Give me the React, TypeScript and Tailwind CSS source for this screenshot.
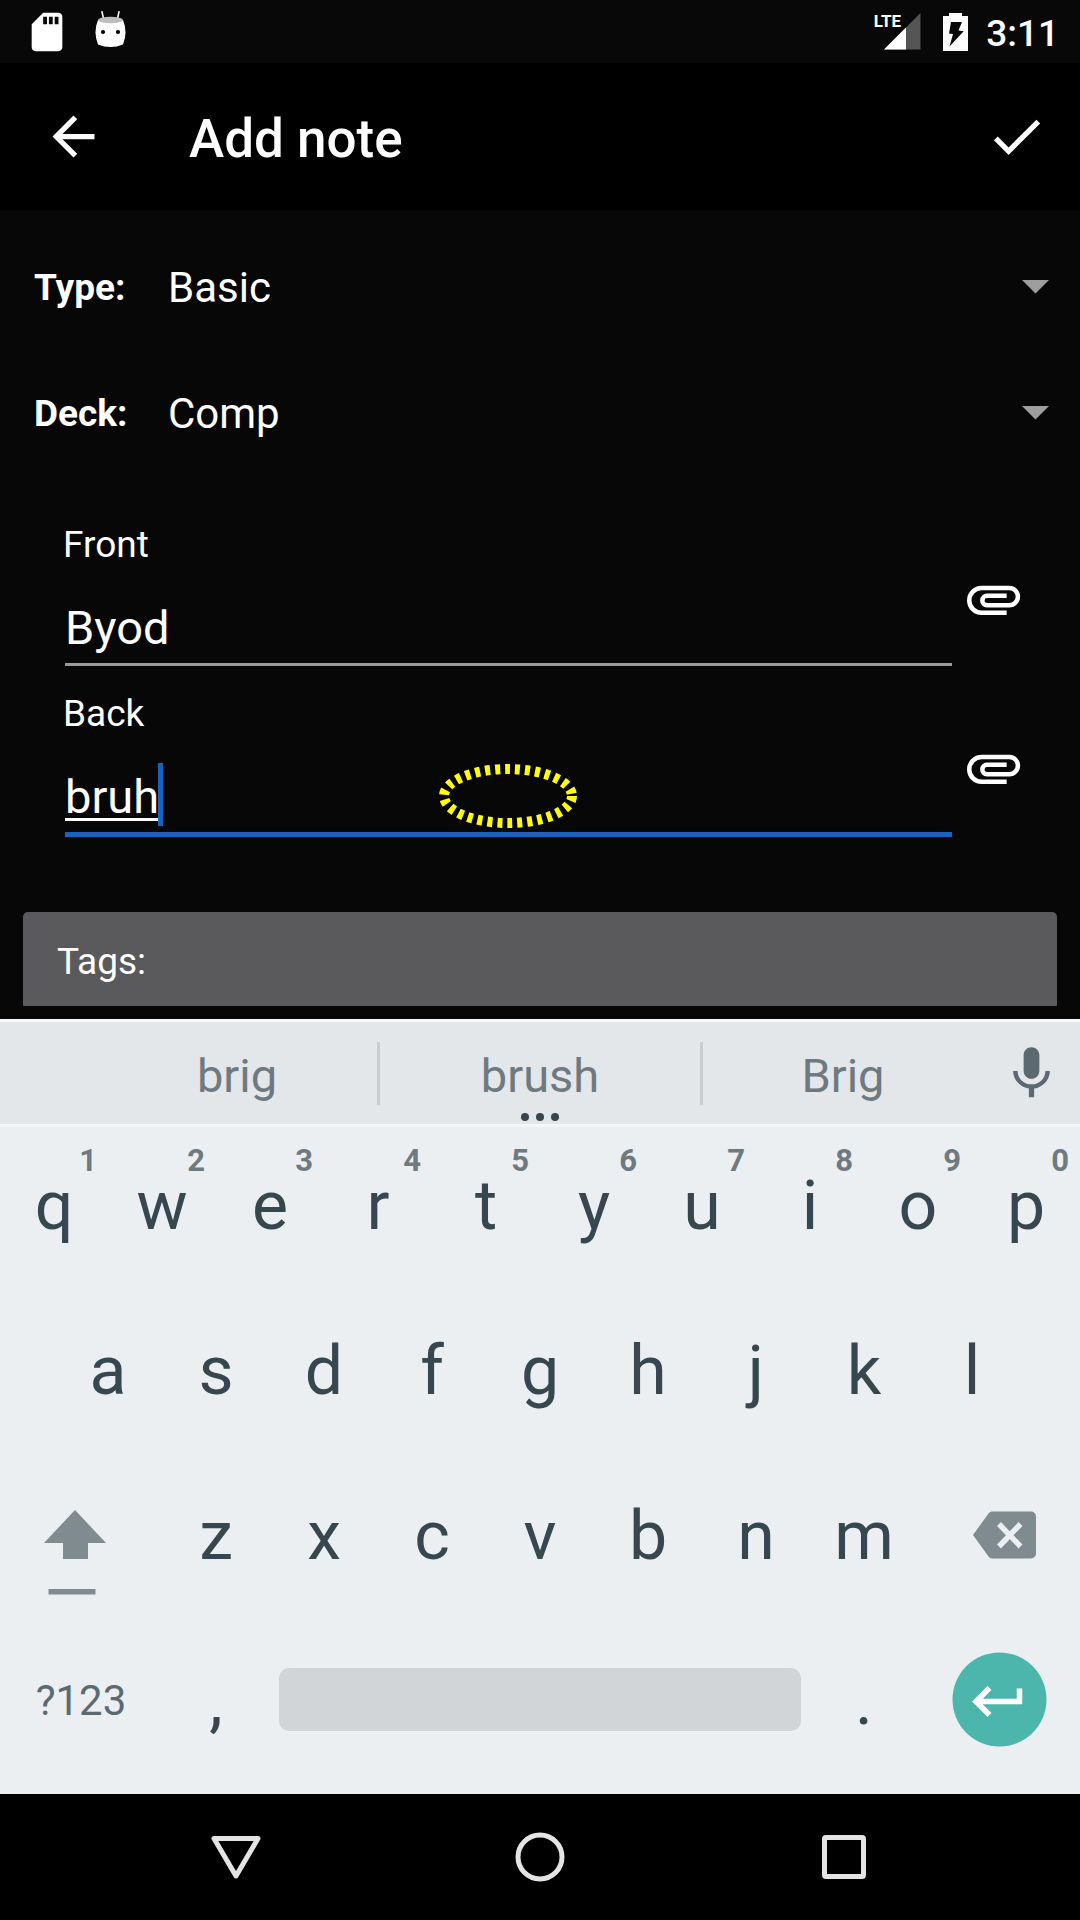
import React from "react";

const TOP_ROW = ["q", "w", "e", "r", "t", "y", "u", "i", "o", "p"];
const HOME_ROW = ["a", "s", "d", "f", "g", "h", "j", "k", "l"];
const BOTTOM_ROW = ["z", "x", "c", "v", "b", "n", "m"];

function StatusBar() {
  return (
    <div className="flex h-[63px] items-center bg-[#080808] pr-[21px] pl-6">
      <svg width="46" height="46" viewBox="0 0 24 24" fill="#fff" aria-hidden="true">
        <path d="M18 2h-8L4.020 8 4 20c0 1.100.9 2 2 2h12c1.100 0 2-.9 2-2V4c0-1.100-.9-2-2-2zm-6 6h-2V4h2v4zm3 0h-2V4h2v4zm3 0h-2V4h2v4z" />
      </svg>
      <svg className="mb-1 ml-[25px]" width="31" height="37" viewBox="0 0 31 37" aria-hidden="true">
        <path d="M7 .8L8.600 8M24 .8L22.400 8" stroke="#fff" strokeWidth="1.600" strokeLinecap="round" />
        <path d="M3 9Q-2 21 3 33.500Q15.500 38.500 28 33.500Q33 21 28 9Z" fill="#fff" />
        <ellipse cx="15.500" cy="9" rx="12.500" ry="3.300" fill="#bdbdbd" />
        <circle cx="8" cy="21" r="2.100" fill="#000" />
        <circle cx="23" cy="21" r="2.100" fill="#000" />
      </svg>
      <div className="relative ml-auto flex w-[50px] justify-end">
        <svg width="37" height="37" viewBox="0 0 37 37" aria-hidden="true">
          <path d="M0 36.500L36.500 0V36.500Z" fill="#555" />
          <path d="M0 36.500L22 14.500V36.500Z" fill="#fff" />
        </svg>
        <span className="absolute top-0 right-5 text-[17px] leading-4 font-bold">LTE</span>
      </div>
      <svg className="ml-[22px]" width="25" height="38" viewBox="0 0 25 38" aria-hidden="true">
        <path d="M6 0H19V3H25V38H0V3H6Z" fill="#fff" />
        <path d="M8 9H19L15.500 17.500L20.700 18.300L6.500 33.500L10 21L6 20.500Z" fill="#080808" />
      </svg>
      <span className="ml-[18px] pt-1 text-[37px] leading-[44px] font-medium">3:11</span>
    </div>
  );
}

function Toolbar() {
  return (
    <header className="flex h-[147px] items-center bg-black pr-8 pl-[42px]">
      <button type="button" aria-label="Back">
        <svg width="63" height="63" viewBox="0 0 24 24" fill="#fff">
          <path d="M20 11H7.830l5.590-5.590L12 4l-8 8 8 8 1.410-1.410L7.830 13H20v-2z" />
        </svg>
      </button>
      <h1 className="ml-[84px] pt-[4px] text-[53px] leading-[62px] font-medium">Add note</h1>
      <button type="button" aria-label="Save" className="ml-auto">
        <svg width="63" height="63" viewBox="0 0 24 24" fill="#fff">
          <path d="M9 16.170L4.830 12l-1.420 1.410L9 19 21 7l-1.410-1.410z" />
        </svg>
      </button>
    </header>
  );
}

function Picker({ id, label, value }: { id: string; label: string; value: string }) {
  return (
    <div className="relative flex h-[126px] items-center pr-[31px] pb-0.5 pl-[34px]">
      <label htmlFor={id} className="w-[134px] pt-0.5 text-[37px] leading-[44px] font-bold">
        {label}
      </label>
      <select id={id} defaultValue={value} className="h-full flex-1 appearance-none bg-transparent text-[42px] outline-none">
        <option>{value}</option>
      </select>
      <svg className="pointer-events-none" width="27" height="14" viewBox="0 0 27 14" aria-hidden="true">
        <path d="M0 0H27L13.500 13.500Z" fill="#9e9e9e" />
      </svg>
    </div>
  );
}

function NoteField({ id, label, value, active = false }: { id: string; label: string; value: string; active?: boolean }) {
  return (
    <div className="flex items-start pr-[55px] pl-[63px]">
      <div className="relative flex flex-1 flex-col">
        <label htmlFor={id} className="h-[44px] text-[37px] leading-[46px]">
          {label}
        </label>
        <input
          id={id}
          defaultValue={value}
          spellCheck={false}
          className={
            active
              ? "ml-0.5 box-content h-[70px] border-b-[5px] border-[#1565c0] bg-transparent pt-[27px] text-[47px] underline decoration-[3px] underline-offset-[5px] outline-none"
              : "ml-0.5 box-content h-[70px] border-b-[3px] border-[#9a9a9a] bg-transparent pt-[27px] text-[47px] outline-none"
          }
        />
        {active && (
          <>
            <span className="absolute bottom-[11px] left-[95px] h-[63px] w-[5px] bg-[#1565c0]" />
            <svg className="absolute bottom-[9px] left-[375px]" width="140" height="64" viewBox="0 0 140 64" fill="none" aria-hidden="true">
              <ellipse cx="70" cy="32" rx="64" ry="27" stroke="#ff0" strokeWidth="10" strokeDasharray="5 5" />
            </svg>
          </>
        )}
      </div>
      <button type="button" aria-label={`Attach media to ${label}`} className="mt-[47px] ml-[10px]">
        <svg width="63" height="63" viewBox="0 0 189 189" fill="none" stroke="#fff" strokeWidth="13.500">
          <path d="M134 131.500H59A37.250 37.250 0 0 1 59 57H142A25.750 25.750 0 0 1 142 108.500H75A14 14 0 0 1 75 80.500H134" />
        </svg>
      </button>
    </div>
  );
}

function Suggestions() {
  return (
    <div className="flex h-[108px] items-center border-y-[3px] border-[#f5f7f8] bg-[#e3e7ea] pl-[97px] text-[47px] leading-[56px] text-[#6e7a80]">
      <button type="button" className="flex-[7] pt-1.5">brig</button>
      <span className="h-[63px] w-[3px] bg-[#c9cdd0]" />
      <div className="relative flex flex-[8] justify-center">
        <button type="button" className="pt-1.5">brush</button>
        <svg className="absolute top-[71px]" width="38" height="8" viewBox="0 0 38 8" fill="#37474f" aria-hidden="true">
          <circle cx="4" cy="4" r="4" />
          <circle cx="19" cy="4" r="4" />
          <circle cx="34" cy="4" r="4" />
        </svg>
      </div>
      <span className="h-[63px] w-[3px] bg-[#c9cdd0]" />
      <button type="button" className="flex-[7] pt-1.5">Brig</button>
      <button type="button" aria-label="Voice input" className="flex w-[97px] justify-center">
        <svg width="63" height="63" viewBox="0 0 24 24" fill="#5b6a71">
          <path d="M12 14c1.660 0 2.990-1.340 2.990-3L15 5c0-1.660-1.340-3-3-3S9 3.340 9 5v6c0 1.660 1.340 3 3 3zm5.300-3c0 3-2.540 5.100-5.300 5.100S6.700 14 6.700 11H5c0 3.410 2.720 6.230 6 6.720V21h2v-3.280c3.280-.48 6-3.300 6-6.720h-1.700z" />
        </svg>
      </button>
    </div>
  );
}

function Key({ label, hint }: { label: string; hint?: string }) {
  return (
    <button type="button" className="relative col-span-2 flex items-center justify-center pb-2">
      {label}
      {hint && <span className="absolute top-4 right-[11px] text-[31px] leading-9 font-bold text-[#6e7a80]">{hint}</span>}
    </button>
  );
}

function Keyboard() {
  return (
    <section aria-label="Keyboard" className="bg-[#ebeff2] pb-[7px] text-[68px] leading-[80px] text-[#37474f]">
      <Suggestions />
      <div className="grid h-[165px] grid-cols-20">
        {TOP_ROW.map((k, i) => (
          <Key key={k} label={k} hint={String((i + 1) % 10)} />
        ))}
      </div>
      <div className="grid h-[165px] grid-cols-18 px-[5%]">
        {HOME_ROW.map((k) => (
          <Key key={k} label={k} />
        ))}
      </div>
      <div className="grid h-[165px] grid-cols-20">
        <button type="button" aria-label="Shift" className="col-span-3 flex items-start justify-center pt-[53px] pr-3">
          <svg width="62" height="85" viewBox="0 0 62 85" fill="#808b8f">
            <path d="M31 0L62 33H44V49H19V33H0Z" />
            <path d="M4.500 79H51.500V84.500H4.500Z" />
          </svg>
        </button>
        {BOTTOM_ROW.map((k) => (
          <Key key={k} label={k} />
        ))}
        <button type="button" aria-label="Backspace" className="col-span-3 flex items-center justify-center pb-[9px] pl-[11px]">
          <svg width="63" height="48" viewBox="0 0 63 47" fill="#808b8f">
            <path d="M19 0H58a5 5 0 0 1 5 5V42a5 5 0 0 1-5 5H19Q17 47 15.500 45L0 23.500L15.500 2Q17 0 19 0Z" />
            <path d="M26 12.500L47.500 35M47.500 12.500L26 35" stroke="#ebeff2" strokeWidth="5.500" />
          </svg>
        </button>
      </div>
      <div className="grid h-[165px] grid-cols-20">
        <button type="button" className="col-span-3 pb-2 text-[42px] text-[#5b6a71]">?123</button>
        <Key label="," />
        <button type="button" aria-label="Space" className="col-span-10 flex items-center px-[9px] pb-2.5">
          <span className="h-[63px] flex-1 rounded-[10px] bg-[#d1d5d8]" />
        </button>
        <Key label="." />
        <button type="button" aria-label="Enter" className="col-span-3 flex items-center justify-center pb-2.5">
          <svg width="95" height="95" viewBox="0 0 95 95" fill="none">
            <circle cx="47.500" cy="47.500" r="47" fill="#4db6ac" />
            <path d="M67.500 36.500V49.500H26M37.500 36L24 49.500L37.500 63" stroke="#fff" strokeWidth="5.500" />
          </svg>
        </button>
      </div>
    </section>
  );
}

function NavigationBar() {
  return (
    <nav className="flex h-[126px] items-center justify-center gap-[254px] bg-black">
      <button type="button" aria-label="Back">
        <svg width="50" height="50" viewBox="0 0 50 50" fill="none" stroke="#e4e4e4" strokeWidth="5" strokeLinejoin="round">
          <path d="M3 6.500H47L25 44Z" />
        </svg>
      </button>
      <button type="button" aria-label="Home">
        <svg width="50" height="50" viewBox="0 0 50 50" fill="none" stroke="#e4e4e4" strokeWidth="5">
          <circle cx="25" cy="25" r="22" />
        </svg>
      </button>
      <button type="button" aria-label="Overview">
        <svg width="50" height="50" viewBox="0 0 50 50" fill="none" stroke="#e4e4e4" strokeWidth="5">
          <rect x="5.500" y="5.500" width="39" height="39" rx="1.500" />
        </svg>
      </button>
    </nav>
  );
}

export default function App() {
  return (
    <div className="flex min-h-screen flex-col bg-[#070707] font-[Roboto,sans-serif] text-white">
      <StatusBar />
      <Toolbar />
      <main className="flex-1 pt-[15px]">
        <Picker id="type" label="Type:" value="Basic" />
        <Picker id="deck" label="Deck:" value="Comp" />
        <div className="mt-[45px] flex flex-col gap-[25px]">
          <NoteField id="front" label="Front" value="Byod" />
          <NoteField id="back" label="Back" value="bruh" active />
        </div>
        <div className="flex px-[23px] pt-[75px] pb-[13px]">
          <button type="button" className="h-[94px] flex-1 rounded-t-[5px] rounded-b-[1px] bg-[#5a5a5c] pt-1.5 pl-[34px] text-left text-[37px] leading-[44px]">
            Tags:
          </button>
        </div>
      </main>
      <Keyboard />
      <NavigationBar />
    </div>
  );
}
